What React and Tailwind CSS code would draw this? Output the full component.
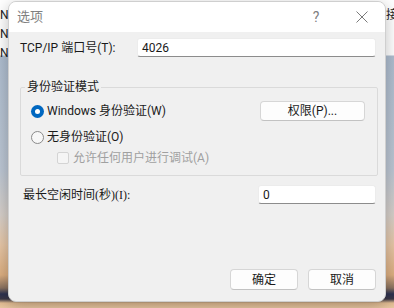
import React from "react";

function Radio({ checked }) {
  if (checked) {
    return (
      <span className="flex h-[13px] w-[13px] shrink-0 items-center justify-center rounded-full bg-[#0067c0]">
        <span className="h-[5px] w-[5px] rounded-full bg-white" />
      </span>
    );
  }
  return <span className="h-[13px] w-[13px] shrink-0 rounded-full border border-[#8a8a8a] bg-[#f7f7f7]" />;
}

function Button({ children, className = "" }) {
  return (
    <div
      className={
        "flex items-center justify-center rounded-[4px] border border-[#d6d6d6] border-b-[#c2c2c2] bg-[#fdfdfd] text-[12px] text-[#1a1a1a] " +
        className
      }
    >
      {children}
    </div>
  );
}

function Input({ value, className = "" }) {
  return (
    <div
      className={
        "flex items-center rounded-[3px] border border-[#ececec] border-b-[#8c8c8c] bg-white pl-[4px] text-[12px] text-[#1a1a1a] " +
        className
      }
    >
      {value}
    </div>
  );
}

export default function App() {
  return (
    <div className="relative h-[308px] w-[394px] overflow-hidden bg-[linear-gradient(180deg,#ffffff_0px,#ffffff_55px,#aebdcf_56px,#bcc6d3_170px,#d6cfc9_215px,#e6c6a6_245px,#dcae80_275px,#8a7260_288px,#2c3150_294px,#3a3646_299px,#e2bc92_303px,#eac8a2_308px)] font-['Roboto','Noto_Sans_CJK_SC',sans-serif]">
      {/* background window text */}
      <div className="absolute left-0 top-[6px] flex flex-col text-[12px] leading-[19px] text-[#222]">
        <span>N</span>
        <span>N</span>
        <span>N</span>
      </div>
      <div className="absolute left-[386px] top-[8px] text-[12px] leading-[14px] text-[#222]">接</div>

      {/* dialog window */}
      <div className="absolute left-[8px] top-[1px] flex h-[301px] w-[378px] flex-col overflow-hidden rounded-[8px] border border-[#cfcfcf] bg-[#f0f0f0] shadow-[0_4px_16px_rgba(0,0,0,0.25)]">
        {/* title bar */}
        <div className="flex h-[30px] shrink-0 items-center bg-white">
          <span className="pl-[8px] text-[13px] text-[#808080]">选项</span>
          <div className="ml-auto flex h-full">
            <div className="flex h-full w-[46px] items-center justify-center text-[14px] text-[#808080]">?</div>
            <div className="flex h-full w-[46px] items-center justify-center">
              <svg width="12" height="12" viewBox="0 0 12 12">
                <path d="M0.5 0.5 L11.5 11.5 M11.5 0.5 L0.5 11.5" stroke="#7a7a7a" strokeWidth="1" fill="none" />
              </svg>
            </div>
          </div>
        </div>

        {/* body */}
        <div className="flex flex-1 flex-col pl-[11px] pr-[9px] pb-[11px] text-[12px] text-[#1a1a1a]">
          <div className="mt-[6px] flex h-[19px] items-center">
            <span className="w-[117px] shrink-0">TCP/IP 端口号(T):</span>
            <Input value="4026" className="h-[19px] flex-1" />
          </div>

          <fieldset className="mt-[23px] mr-[-2px] rounded-[2px] border border-[#dadada] pl-[4px] pr-[12px] pb-[10px] pt-[7px]">
            <legend className="px-[2px] text-[12px] leading-[14px]">身份验证模式</legend>
            <div className="flex flex-col pl-[6px]">
              <div className="flex h-[20px] items-center">
                <Radio checked />
                <span className="ml-[3px]">Windows 身份验证(W)</span>
                <Button className="ml-auto h-[20px] w-[105px]">权限(P)...</Button>
              </div>
              <div className="mt-[8px] flex h-[16px] items-center">
                <Radio />
                <span className="ml-[3px]">无身份验证(O)</span>
              </div>
              <div className="mt-[6px] flex h-[14px] items-center pl-[26px]">
                <span className="h-[12px] w-[12px] shrink-0 rounded-[2px] border border-[#d4d4d4] bg-[#f5f5f5]" />
                <span className="ml-[4px] text-[#a0a0a0]">允许任何用户进行调试(A)</span>
              </div>
            </div>
          </fieldset>

          <div className="mt-[9px] flex h-[19px] items-center">
            <span className="pl-[3px]">
              最长空闲时间<span className="font-['Liberation_Serif','Noto_Sans_CJK_SC',serif]">(秒)(I):</span>
            </span>
            <Input value="0" className="ml-auto h-[19px] w-[118px]" />
          </div>

          <div className="mt-auto flex justify-end gap-[10px]">
            <Button className="h-[21px] w-[68px]">确定</Button>
            <Button className="h-[21px] w-[68px]">取消</Button>
          </div>
        </div>
      </div>
    </div>
  );
}
